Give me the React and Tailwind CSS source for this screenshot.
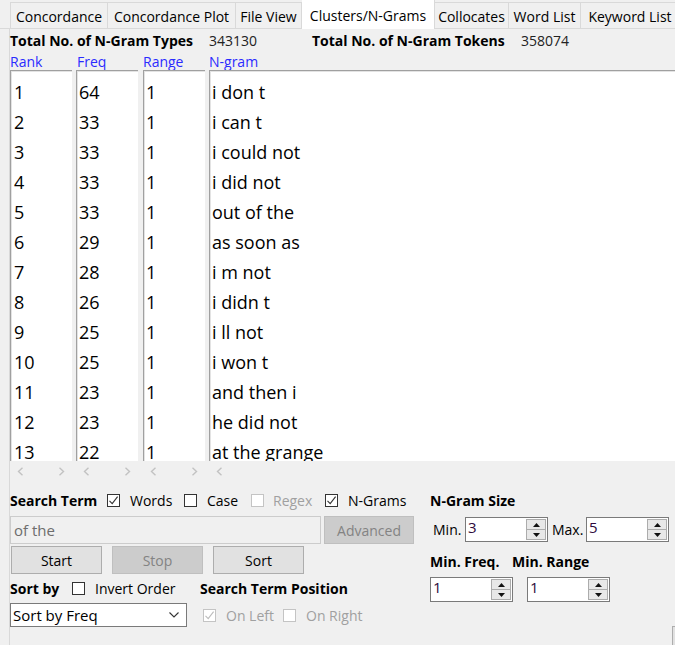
import React from "react";

const tabs = [
  ["Concordance", 98],
  ["Concordance Plot", 129],
  ["File View", 67],
  ["Clusters/N-Grams", 133, true],
  ["Collocates", 75],
  ["Word List", 73],
  ["Keyword List", 100],
];

const rows = [
  [1, 64, "i don t"],
  [2, 33, "i can t"],
  [3, 33, "i could not"],
  [4, 33, "i did not"],
  [5, 33, "out of the"],
  [6, 29, "as soon as"],
  [7, 28, "i m not"],
  [8, 26, "i didn t"],
  [9, 25, "i ll not"],
  [10, 25, "i won t"],
  [11, 23, "and then i"],
  [12, 23, "he did not"],
  [13, 22, "at the grange"],
];

function Check({ checked, disabled }) {
  return (
    <span
      className={
        disabled
          ? "w-[13px] h-[13px] border border-[#c4c4c4] bg-white flex items-center justify-center shrink-0"
          : "w-[13px] h-[13px] border border-[#333333] bg-white flex items-center justify-center shrink-0"
      }
    >
      {checked && (
        <svg width="11" height="11" viewBox="0 0 11 11">
          <path
            d="M1.5 5.8 L4.2 8.6 L9.6 1.6"
            fill="none"
            stroke={disabled ? "#bcbcbc" : "#333333"}
            strokeWidth="1.1"
          />
        </svg>
      )}
    </span>
  );
}

function Chevron({ left }) {
  return (
    <svg width="7" height="9" viewBox="0 0 7 9">
      <path
        d={left ? "M5.5 0.8 L1.5 4.5 L5.5 8.2" : "M1.5 0.8 L5.5 4.5 L1.5 8.2"}
        fill="none"
        stroke="#c2c2c2"
        strokeWidth="1.4"
      />
    </svg>
  );
}

function Spin({ value }) {
  return (
    <div className="w-[83px] h-[25px] border border-[#7a7a7a] bg-white flex shrink-0">
      <div className="flex-1 pl-[2px] text-[15px] leading-[18px] text-[#2e0a3c]">{value}</div>
      <div className="w-[20px] my-[1px] mr-[1px] flex flex-col border border-[#acacac] bg-[#e8e8e8]">
        <div className="flex-1 flex items-center justify-center border-b border-[#acacac]">
          <svg width="7" height="4" viewBox="0 0 7 4"><path d="M0 4 L3.5 0 L7 4 Z" fill="#111" /></svg>
        </div>
        <div className="flex-1 flex items-center justify-center">
          <svg width="7" height="4" viewBox="0 0 7 4"><path d="M0 0 L3.5 4 L7 0 Z" fill="#111" /></svg>
        </div>
      </div>
    </div>
  );
}

function ListBox({ children, w, last }) {
  return (
    <div
      className={
        last
          ? "flex-1 h-full bg-white border-t border-l border-[#a0a0a0] shadow-[inset_1px_1px_0_#e3e3e3] overflow-hidden pt-[6px]"
          : "h-full bg-white border-t border-l border-[#a0a0a0] shadow-[inset_1px_1px_0_#e3e3e3] overflow-hidden pt-[6px]"
      }
      style={w ? { width: w } : undefined}
    >
      {children}
    </div>
  );
}

export default function App() {
  return (
    <div className="w-[675px] h-[645px] bg-[#f0f0f0] overflow-hidden font-['Open_Sans','Noto_Sans',sans-serif] text-[14px] text-black">
      {/* tab bar */}
      <div className="h-[29px] flex items-end pl-[10px] border-b border-[#d9d9d9]">
        {tabs.map(([t, w, active]) =>
          active ? (
            <div
              key={t}
              className="h-[30px] -mb-px bg-white border-t border-r border-[#d9d9d9] flex items-center justify-center shrink-0 pt-[1px]"
              style={{ width: w }}
            >
              {t}
            </div>
          ) : (
            <div
              key={t}
              className="h-[26px] bg-[#f0f0f0] border-t border-r border-l border-[#d9d9d9] -ml-px first:ml-0 flex items-center justify-center shrink-0 whitespace-nowrap pt-[1px]"
              style={{ width: w }}
            >
              {t}
            </div>
          )
        )}
      </div>

      {/* panel */}
      <div className="ml-[9px] h-[616px] border-l border-[#d9d9d9] flex flex-col">
        {/* stats */}
        <div className="h-[26px] pt-[1px] grid grid-cols-[199px_103px_209px_1fr] items-center">
          <span className="font-bold">Total No. of N-Gram Types</span>
          <span className="text-[#222]">343130</span>
          <span className="font-bold">Total No. of N-Gram Tokens</span>
          <span className="text-[#222]">358074</span>
        </div>
        {/* headers */}
        <div className="h-[19px] grid grid-cols-[67px_66px_66px_1fr] items-center text-[#2b2bff]">
          <span>Rank</span>
          <span>Freq</span>
          <span>Range</span>
          <span>N-gram</span>
        </div>
        {/* lists */}
        <div className="h-[391px] shrink-0 flex text-[18px] leading-[30px]">
          <ListBox w={62}>
            {rows.map((r) => (
              <div key={r[0]} className="pl-[3px]">{r[0]}</div>
            ))}
          </ListBox>
          <div className="w-[4px]" />
          <ListBox w={62}>
            {rows.map((r) => (
              <div key={r[0]} className="pl-[2px]">{r[1]}</div>
            ))}
          </ListBox>
          <div className="w-[5px]" />
          <ListBox w={62}>
            {rows.map((r) => (
              <div key={r[0]} className="pl-[2px]">1</div>
            ))}
          </ListBox>
          <div className="w-[4px]" />
          <ListBox last>
            {rows.map((r) => (
              <div key={r[0]} className="pl-[2px] whitespace-nowrap">{r[2]}</div>
            ))}
          </ListBox>
        </div>
        {/* scroll arrows */}
        <div className="h-[25px] shrink-0 flex items-start pt-[6px]">
          <div className="w-[62px] flex justify-between px-[7px]"><Chevron left /><Chevron /></div>
          <div className="w-[4px]" />
          <div className="w-[62px] flex justify-between px-[7px]"><Chevron left /><Chevron /></div>
          <div className="w-[5px]" />
          <div className="w-[62px] flex justify-between px-[7px]"><Chevron left /><Chevron /></div>
          <div className="w-[4px]" />
          <div className="pl-[7px]"><Chevron left /></div>
        </div>

        {/* controls */}
        <div className="flex">
          {/* left column */}
          <div className="w-[404px] shrink-0 flex flex-col">
            <div className="h-[28px] flex items-center">
              <span className="font-bold w-[97px]">Search Term</span>
              <Check checked />
              <span className="ml-[10px] w-[54px]">Words</span>
              <Check />
              <span className="ml-[10px] w-[44px] ">Case</span>
              <Check disabled />
              <span className="ml-[9px] w-[52px] text-[#a0a0a0]">Regex</span>
              <Check checked />
              <span className="ml-[10px]">N-Grams</span>
            </div>
            <div className="mt-[2px] h-[28px] flex">
              <div className="w-[311px] h-full border border-[#cccccc] bg-[#f0f0f0] pl-[3px] flex items-center text-[15px] text-[#6d6d6d]">
                of the
              </div>
              <div className="ml-[3px] w-[90px] h-full border border-[#bfbfbf] bg-[#cccccc] text-[#838383] flex items-center justify-center">
                Advanced
              </div>
            </div>
            <div className="mt-[2px] h-[28px] flex pl-[1px] gap-[10px]">
              <div className="w-[91px] h-full border border-[#adadad] bg-[#e1e1e1] flex items-center justify-center">Start</div>
              <div className="w-[91px] h-full border border-[#bfbfbf] bg-[#cccccc] text-[#838383] flex items-center justify-center">Stop</div>
              <div className="w-[91px] h-full border border-[#adadad] bg-[#e1e1e1] flex items-center justify-center">Sort</div>
            </div>
            <div className="h-[29px] grid grid-cols-[190px_1fr] items-center">
              <div className="flex items-center">
                <span className="font-bold w-[62px]">Sort by</span>
                <Check />
                <span className="ml-[10px]">Invert Order</span>
              </div>
              <span className="font-bold">Search Term Position</span>
            </div>
            <div className="h-[24px] grid grid-cols-[193px_1fr] items-center">
              <div className="w-[177px] h-[24px] border border-[#7a7a7a] bg-white flex items-center pl-[2px] text-[15px]">
                <span className="flex-1">Sort by Freq</span>
                <svg width="10" height="6" viewBox="0 0 10 6" className="mr-[7px]">
                  <path d="M0.5 0.5 L5 5 L9.5 0.5" fill="none" stroke="#333" strokeWidth="1.1" />
                </svg>
              </div>
              <div className="flex items-center">
                <Check checked disabled />
                <span className="ml-[10px] w-[57px] text-[#a0a0a0]">On Left</span>
                <Check disabled />
                <span className="ml-[10px] text-[#a0a0a0]">On Right</span>
              </div>
            </div>
          </div>

          {/* right column */}
          <div className="ml-[16px] flex flex-col">
            <div className="h-[28px] flex items-center">
              <span className="font-bold">N-Gram Size</span>
            </div>
            <div className="mt-[3px] flex items-center">
              <span className="w-[32px] pl-[3px]">Min.</span>
              <div className="ml-[3px]"><Spin value="3" /></div>
              <span className="ml-[4px] w-[34px]">Max.</span>
              <Spin value="5" />
            </div>
            <div className="mt-[7px] h-[24px] flex items-center">
              <span className="font-bold w-[82px]">Min. Freq.</span>
              <span className="font-bold">Min. Range</span>
            </div>
            <div className="mt-[4px] flex items-center">
              <Spin value="1" />
              <div className="ml-[14px]"><Spin value="1" /></div>
            </div>
            <div className="mt-[24px] ml-[242px] w-[20px] h-[20px] border border-[#adadad] bg-[#e1e1e1]" />
          </div>
        </div>
      </div>
    </div>
  );
}
